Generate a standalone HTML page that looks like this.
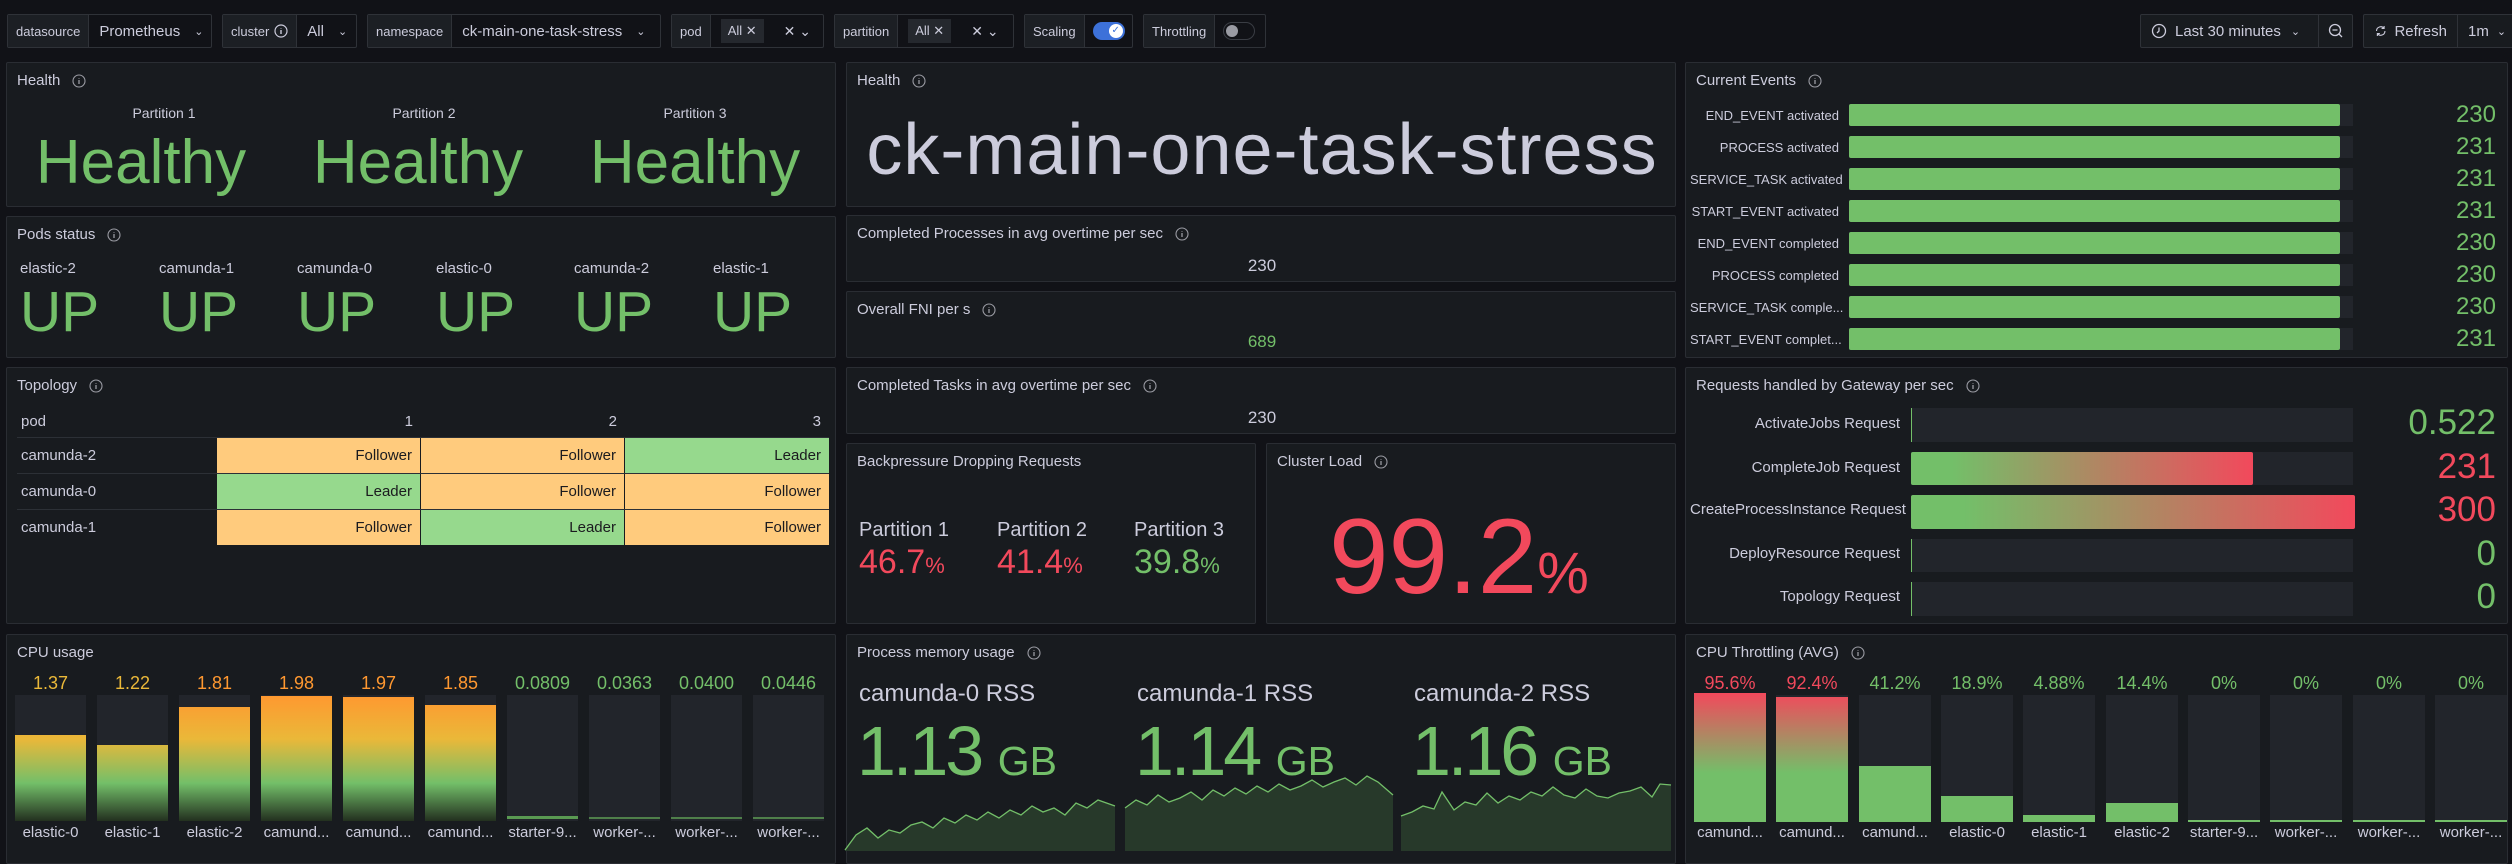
<!DOCTYPE html>
<html><head><meta charset="utf-8"><style>
*{box-sizing:border-box;margin:0;padding:0}
body{width:2512px;height:851px;background:#111217;overflow:hidden;position:relative;font-family:"Liberation Sans",sans-serif;color:#ccccdc}
.a{position:absolute}
.p{position:absolute;background:#181b1f;border:1px solid #2a2d33;border-radius:2px;overflow:hidden}
.t{position:absolute;left:10px;top:9px;font-size:15px;color:#ccccdc;white-space:nowrap;display:flex;align-items:center}
.t svg{margin-left:12px}
.box{position:absolute;top:14px;height:34px;border:1px solid #2f3238;border-radius:2px;display:flex;align-items:center;background:#111217}
.lab{height:100%;display:flex;align-items:center;padding:0 8px;background:#1c1f24;border-right:1px solid #2f3238;font-size:13px;color:#ccccdc}
.val{padding:0 10px;font-size:15px;color:#ccccdc;display:flex;align-items:center}
.g{color:#73bf69}.r{color:#f2495c}.o{color:#ff9830}
.c{position:absolute;text-align:center;white-space:nowrap}
.cell{position:absolute;height:35px;text-align:right;padding-right:8px;line-height:35px;font-size:15px;color:#1b1b1f}
.F{background:#ffcb7d}.L{background:#96d98d}
.trk{position:absolute;background:#22252b}
.fl{position:absolute;left:0;bottom:0;width:100%}
</style></head><body>

<div class="box" style="left:7px;width:205px"><div class="lab">datasource</div><div class="val">Prometheus <span style="margin-left:14px;font-size:11px">⌄</span></div></div>
<div class="box" style="left:222px;width:135px"><div class="lab">cluster <svg width="14" height="14" style="margin-left:5px" viewBox="0 0 14 14"><circle cx="7" cy="7" r="6" fill="none" stroke="#ccccdc" stroke-width="1.2"/><path d="M7 6v4M7 4v.5" stroke="#ccccdc" stroke-width="1.4"/></svg></div><div class="val">All <span style="margin-left:14px;font-size:11px">⌄</span></div></div>
<div class="box" style="left:367px;width:294px"><div class="lab">namespace</div><div class="val">ck-main-one-task-stress <span style="margin-left:14px;font-size:11px">⌄</span></div></div>
<div class="box" style="left:671px;width:153px"><div class="lab">pod</div><div class="val"><span style="background:#25282e;padding:4px 7px;font-size:13px">All ✕</span><span style="margin-left:20px;font-size:14px">✕ ⌄</span></div></div>
<div class="box" style="left:834px;width:180px"><div class="lab">partition</div><div class="val"><span style="background:#25282e;padding:4px 7px;font-size:13px">All ✕</span><span style="margin-left:20px;font-size:14px">✕ ⌄</span></div></div>
<div class="box" style="left:1024px;width:109px"><div class="lab">Scaling</div><div class="val" style="padding:0 8px"><span style="display:inline-block;width:32px;height:18px;border-radius:9px;background:#3d71d9;position:relative"><span style="position:absolute;right:2px;top:2px;width:14px;height:14px;border-radius:7px;background:#fff;color:#3d71d9;font-size:10px;line-height:14px;text-align:center">✓</span></span></div></div>
<div class="box" style="left:1143px;width:123px"><div class="lab">Throttling</div><div class="val" style="padding:0 8px"><span style="display:inline-block;width:32px;height:18px;border-radius:9px;border:1px solid #3a3d44;position:relative"><span style="position:absolute;left:2px;top:2px;width:12px;height:12px;border-radius:6px;background:#9a9ba3"></span></span></div></div>

<div class="box" style="left:2140px;width:213px;background:#181b1f"><div class="val" style="width:178px;border-right:1px solid #2f3238;height:100%"><svg width="16" height="16" viewBox="0 0 16 16" style="margin-right:8px"><circle cx="8" cy="8" r="6.5" fill="none" stroke="#ccccdc" stroke-width="1.3"/><path d="M8 4.5V8l-2 2" stroke="#ccccdc" stroke-width="1.3" fill="none"/></svg>Last 30 minutes<span style="margin-left:10px;font-size:11px">⌄</span></div><div style="flex:1;display:flex;justify-content:center"><svg width="16" height="16" viewBox="0 0 16 16"><circle cx="7" cy="7" r="5.5" fill="none" stroke="#ccccdc" stroke-width="1.3"/><path d="M4.5 7h5M11 11l3 3" stroke="#ccccdc" stroke-width="1.3"/></svg></div></div>
<div class="box" style="left:2363px;width:160px;background:#181b1f"><div class="val" style="width:94px;border-right:1px solid #2f3238;height:100%"><svg width="16" height="16" viewBox="0 0 16 16" style="margin-right:7px"><path d="M13 8a5 5 0 0 1-9 3M3 8a5 5 0 0 1 9-3M12 2v3h-3M4 14v-3h3" fill="none" stroke="#ccccdc" stroke-width="1.3"/></svg>Refresh</div><div class="val">1m <span style="margin-left:8px;font-size:11px">⌄</span></div></div>

<div class="p" style="left:6px;top:62px;width:830px;height:145px">
<div class="t">Health<svg width="14" height="14" viewBox="0 0 14 14"><circle cx="7" cy="7" r="6" fill="none" stroke="#9a9ba3" stroke-width="1.1"/><path d="M7 6v4M7 4v.6" stroke="#9a9ba3" stroke-width="1.3"/></svg></div>
<div class="c" style="left:97px;width:120px;top:42px;font-size:14px">Partition 1</div>
<div class="c" style="left:357px;width:120px;top:42px;font-size:14px">Partition 2</div>
<div class="c" style="left:628px;width:120px;top:42px;font-size:14px">Partition 3</div>
<div class="c g" style="left:14px;width:240px;top:64px;font-size:62px">Healthy</div>
<div class="c g" style="left:291px;width:240px;top:64px;font-size:62px">Healthy</div>
<div class="c g" style="left:568px;width:240px;top:64px;font-size:62px">Healthy</div>
</div>

<div class="p" style="left:6px;top:216px;width:830px;height:142px">
<div class="t">Pods status<svg width="14" height="14" viewBox="0 0 14 14"><circle cx="7" cy="7" r="6" fill="none" stroke="#9a9ba3" stroke-width="1.1"/><path d="M7 6v4M7 4v.6" stroke="#9a9ba3" stroke-width="1.3"/></svg></div>
<div class="a" style="left:13px;top:43px;font-size:15px">elastic-2</div>
<div class="a" style="left:152px;top:43px;font-size:15px">camunda-1</div>
<div class="a" style="left:290px;top:43px;font-size:15px">camunda-0</div>
<div class="a" style="left:429px;top:43px;font-size:15px">elastic-0</div>
<div class="a" style="left:567px;top:43px;font-size:15px">camunda-2</div>
<div class="a" style="left:706px;top:43px;font-size:15px">elastic-1</div>
<div class="a g" style="left:13px;top:62px;font-size:57px">UP</div>
<div class="a g" style="left:152px;top:62px;font-size:57px">UP</div>
<div class="a g" style="left:290px;top:62px;font-size:57px">UP</div>
<div class="a g" style="left:429px;top:62px;font-size:57px">UP</div>
<div class="a g" style="left:567px;top:62px;font-size:57px">UP</div>
<div class="a g" style="left:706px;top:62px;font-size:57px">UP</div>
</div>

<div class="p" style="left:6px;top:367px;width:830px;height:257px">
<div class="t">Topology<svg width="14" height="14" viewBox="0 0 14 14"><circle cx="7" cy="7" r="6" fill="none" stroke="#9a9ba3" stroke-width="1.1"/><path d="M7 6v4M7 4v.6" stroke="#9a9ba3" stroke-width="1.3"/></svg></div>
<div class="a" style="left:14px;top:45px;font-size:15px">pod</div>
<div class="a" style="left:210px;width:204px;top:45px;font-size:15px;text-align:right;padding-right:8px">1</div>
<div class="a" style="left:414px;width:204px;top:45px;font-size:15px;text-align:right;padding-right:8px">2</div>
<div class="a" style="left:618px;width:204px;top:45px;font-size:15px;text-align:right;padding-right:8px">3</div>
<div class="a" style="left:10px;width:812px;top:69px;height:1px;background:#2c3036"></div>
<div class="a" style="left:10px;width:812px;top:105px;height:1px;background:#2c3036"></div>
<div class="a" style="left:10px;width:812px;top:141px;height:1px;background:#2c3036"></div>
<div class="a" style="left:14px;top:79px;font-size:15px">camunda-2</div>
<div class="a" style="left:14px;top:115px;font-size:15px">camunda-0</div>
<div class="a" style="left:14px;top:151px;font-size:15px">camunda-1</div>
<div class="cell F" style="left:210px;width:203px;top:70px">Follower</div>
<div class="cell F" style="left:414px;width:203px;top:70px">Follower</div>
<div class="cell L" style="left:618px;width:204px;top:70px">Leader</div>
<div class="cell L" style="left:210px;width:203px;top:106px">Leader</div>
<div class="cell F" style="left:414px;width:203px;top:106px">Follower</div>
<div class="cell F" style="left:618px;width:204px;top:106px">Follower</div>
<div class="cell F" style="left:210px;width:203px;top:142px">Follower</div>
<div class="cell L" style="left:414px;width:203px;top:142px">Leader</div>
<div class="cell F" style="left:618px;width:204px;top:142px">Follower</div>
</div>

<div class="p" style="left:6px;top:634px;width:830px;height:230px">
<div class="t">CPU usage</div>
</div>

<div class="p" style="left:846px;top:62px;width:830px;height:145px">
<div class="t">Health<svg width="14" height="14" viewBox="0 0 14 14"><circle cx="7" cy="7" r="6" fill="none" stroke="#9a9ba3" stroke-width="1.1"/><path d="M7 6v4M7 4v.6" stroke="#9a9ba3" stroke-width="1.3"/></svg></div>
<div class="c" style="left:0;width:830px;top:46px;font-size:72px;letter-spacing:1px;color:#ccccdc">ck-main-one-task-stress</div>
</div>
<div class="p" style="left:846px;top:215px;width:830px;height:67px">
<div class="t">Completed Processes in avg overtime per sec<svg width="14" height="14" viewBox="0 0 14 14"><circle cx="7" cy="7" r="6" fill="none" stroke="#9a9ba3" stroke-width="1.1"/><path d="M7 6v4M7 4v.6" stroke="#9a9ba3" stroke-width="1.3"/></svg></div>
<div class="c" style="left:0;width:830px;top:40px;font-size:17px">230</div>
</div>
<div class="p" style="left:846px;top:291px;width:830px;height:67px">
<div class="t">Overall FNI per s<svg width="14" height="14" viewBox="0 0 14 14"><circle cx="7" cy="7" r="6" fill="none" stroke="#9a9ba3" stroke-width="1.1"/><path d="M7 6v4M7 4v.6" stroke="#9a9ba3" stroke-width="1.3"/></svg></div>
<div class="c g" style="left:0;width:830px;top:40px;font-size:17px">689</div>
</div>
<div class="p" style="left:846px;top:367px;width:830px;height:67px">
<div class="t">Completed Tasks in avg overtime per sec<svg width="14" height="14" viewBox="0 0 14 14"><circle cx="7" cy="7" r="6" fill="none" stroke="#9a9ba3" stroke-width="1.1"/><path d="M7 6v4M7 4v.6" stroke="#9a9ba3" stroke-width="1.3"/></svg></div>
<div class="c" style="left:0;width:830px;top:40px;font-size:17px">230</div>
</div>
<div class="p" style="left:846px;top:443px;width:410px;height:181px">
<div class="t">Backpressure Dropping Requests</div>
<div class="a" style="left:12px;top:75px;font-size:20px">Partition 1</div>
<div class="a" style="left:150px;top:75px;font-size:20px">Partition 2</div>
<div class="a" style="left:287px;top:75px;font-size:20px">Partition 3</div>
<div class="a r" style="left:12px;top:99px;font-size:34px">46.7<span style="font-size:22px">%</span></div>
<div class="a r" style="left:150px;top:99px;font-size:34px">41.4<span style="font-size:22px">%</span></div>
<div class="a g" style="left:287px;top:99px;font-size:34px">39.8<span style="font-size:22px">%</span></div>
</div>
<div class="p" style="left:1266px;top:443px;width:410px;height:181px">
<div class="t">Cluster Load<svg width="14" height="14" viewBox="0 0 14 14"><circle cx="7" cy="7" r="6" fill="none" stroke="#9a9ba3" stroke-width="1.1"/><path d="M7 6v4M7 4v.6" stroke="#9a9ba3" stroke-width="1.3"/></svg></div>
<div class="a r" style="left:62px;top:52px;font-size:107px;line-height:120px;white-space:nowrap">99.2<span style="font-size:58px">%</span></div>
</div>
<div class="p" style="left:846px;top:634px;width:830px;height:230px">
<div class="t">Process memory usage<svg width="14" height="14" viewBox="0 0 14 14"><circle cx="7" cy="7" r="6" fill="none" stroke="#9a9ba3" stroke-width="1.1"/><path d="M7 6v4M7 4v.6" stroke="#9a9ba3" stroke-width="1.3"/></svg></div>
<div class="a" style="left:12px;top:45px;font-size:24px">camunda-0 RSS</div>
<div class="a" style="left:290px;top:45px;font-size:24px">camunda-1 RSS</div>
<div class="a" style="left:567px;top:45px;font-size:24px">camunda-2 RSS</div>
<div class="a g" style="left:10px;top:76px;font-size:70px;letter-spacing:-3px;white-space:nowrap">1.13 <span style="font-size:41px;letter-spacing:0">GB</span></div>
<div class="a g" style="left:288px;top:76px;font-size:70px;letter-spacing:-3px;white-space:nowrap">1.14 <span style="font-size:41px;letter-spacing:0">GB</span></div>
<div class="a g" style="left:565px;top:76px;font-size:70px;letter-spacing:-3px;white-space:nowrap">1.16 <span style="font-size:41px;letter-spacing:0">GB</span></div>
</div>

<div class="p" style="left:1685px;top:62px;width:823px;height:296px">
<div class="t">Current Events<svg width="14" height="14" viewBox="0 0 14 14"><circle cx="7" cy="7" r="6" fill="none" stroke="#9a9ba3" stroke-width="1.1"/><path d="M7 6v4M7 4v.6" stroke="#9a9ba3" stroke-width="1.3"/></svg></div>
</div>
<div class="p" style="left:1685px;top:367px;width:823px;height:257px">
<div class="t">Requests handled by Gateway per sec<svg width="14" height="14" viewBox="0 0 14 14"><circle cx="7" cy="7" r="6" fill="none" stroke="#9a9ba3" stroke-width="1.1"/><path d="M7 6v4M7 4v.6" stroke="#9a9ba3" stroke-width="1.3"/></svg></div>
</div>
<div class="p" style="left:1685px;top:634px;width:823px;height:230px">
<div class="t">CPU Throttling (AVG)<svg width="14" height="14" viewBox="0 0 14 14"><circle cx="7" cy="7" r="6" fill="none" stroke="#9a9ba3" stroke-width="1.1"/><path d="M7 6v4M7 4v.6" stroke="#9a9ba3" stroke-width="1.3"/></svg></div>
</div>

<div class="a" style="left:1690px;top:104px;width:149px;font-size:13px;text-align:right;line-height:24px;white-space:nowrap">END_EVENT activated</div>
<div class="a" style="left:1690px;top:136px;width:149px;font-size:13px;text-align:right;line-height:24px">PROCESS activated</div>
<div class="a" style="left:1690px;top:168px;width:149px;font-size:13px;text-align:right;line-height:24px;white-space:nowrap">SERVICE_TASK activated</div>
<div class="a" style="left:1690px;top:200px;width:149px;font-size:13px;text-align:right;line-height:24px;white-space:nowrap">START_EVENT activated</div>
<div class="a" style="left:1690px;top:232px;width:149px;font-size:13px;text-align:right;line-height:24px;white-space:nowrap">END_EVENT completed</div>
<div class="a" style="left:1690px;top:264px;width:149px;font-size:13px;text-align:right;line-height:24px">PROCESS completed</div>
<div class="a" style="left:1690px;top:296px;width:149px;font-size:13px;text-align:right;line-height:24px;white-space:nowrap">SERVICE_TASK comple...</div>
<div class="a" style="left:1690px;top:328px;width:149px;font-size:13px;text-align:right;line-height:24px;white-space:nowrap">START_EVENT complet...</div>
<div class="trk" style="left:1849px;top:104px;width:504px;height:22px"><div class="a" style="left:0;top:0;width:491px;height:22px;background:#73bf69;border-radius:2px"></div></div>
<div class="trk" style="left:1849px;top:136px;width:504px;height:22px"><div class="a" style="left:0;top:0;width:491px;height:22px;background:#73bf69;border-radius:2px"></div></div>
<div class="trk" style="left:1849px;top:168px;width:504px;height:22px"><div class="a" style="left:0;top:0;width:491px;height:22px;background:#73bf69;border-radius:2px"></div></div>
<div class="trk" style="left:1849px;top:200px;width:504px;height:22px"><div class="a" style="left:0;top:0;width:491px;height:22px;background:#73bf69;border-radius:2px"></div></div>
<div class="trk" style="left:1849px;top:232px;width:504px;height:22px"><div class="a" style="left:0;top:0;width:491px;height:22px;background:#73bf69;border-radius:2px"></div></div>
<div class="trk" style="left:1849px;top:264px;width:504px;height:22px"><div class="a" style="left:0;top:0;width:491px;height:22px;background:#73bf69;border-radius:2px"></div></div>
<div class="trk" style="left:1849px;top:296px;width:504px;height:22px"><div class="a" style="left:0;top:0;width:491px;height:22px;background:#73bf69;border-radius:2px"></div></div>
<div class="trk" style="left:1849px;top:328px;width:504px;height:22px"><div class="a" style="left:0;top:0;width:491px;height:22px;background:#73bf69;border-radius:2px"></div></div>
<div class="a g" style="left:2400px;width:96px;top:101px;font-size:24px;text-align:right">230</div>
<div class="a g" style="left:2400px;width:96px;top:133px;font-size:24px;text-align:right">231</div>
<div class="a g" style="left:2400px;width:96px;top:165px;font-size:24px;text-align:right">231</div>
<div class="a g" style="left:2400px;width:96px;top:197px;font-size:24px;text-align:right">231</div>
<div class="a g" style="left:2400px;width:96px;top:229px;font-size:24px;text-align:right">230</div>
<div class="a g" style="left:2400px;width:96px;top:261px;font-size:24px;text-align:right">230</div>
<div class="a g" style="left:2400px;width:96px;top:293px;font-size:24px;text-align:right">230</div>
<div class="a g" style="left:2400px;width:96px;top:325px;font-size:24px;text-align:right">231</div>

<div class="a" style="left:1690px;top:415px;width:210px;font-size:15px;text-align:right">ActivateJobs Request</div>
<div class="a" style="left:1690px;top:459px;width:210px;font-size:15px;text-align:right">CompleteJob Request</div>
<div class="a" style="left:1690px;top:501px;width:210px;font-size:15px;text-align:right;white-space:nowrap">CreateProcessInstance Request</div>
<div class="a" style="left:1690px;top:545px;width:210px;font-size:15px;text-align:right">DeployResource Request</div>
<div class="a" style="left:1690px;top:588px;width:210px;font-size:15px;text-align:right">Topology Request</div>
<div class="trk" style="left:1911px;top:408px;width:442px;height:34px;border-left:1px solid #73bf69"></div>
<div class="trk" style="left:1911px;top:452px;width:442px;height:33px"><div class="a" style="left:0;top:0;width:342px;height:33px;background:linear-gradient(90deg,#73bf69 12%,#f2495c 100%);border-radius:2px"></div></div>
<div class="trk" style="left:1911px;top:495px;width:444px;height:34px;background:linear-gradient(90deg,#73bf69 12%,#f2495c 100%);border-radius:2px"></div>
<div class="trk" style="left:1911px;top:539px;width:442px;height:33px;border-left:1px solid #73bf69"></div>
<div class="trk" style="left:1911px;top:582px;width:442px;height:34px;border-left:1px solid #73bf69"></div>
<div class="a g" style="left:2360px;width:136px;top:403px;font-size:35px;text-align:right">0.522</div>
<div class="a r" style="left:2360px;width:136px;top:447px;font-size:35px;text-align:right">231</div>
<div class="a r" style="left:2360px;width:136px;top:490px;font-size:35px;text-align:right">300</div>
<div class="a g" style="left:2360px;width:136px;top:534px;font-size:35px;text-align:right">0</div>
<div class="a g" style="left:2360px;width:136px;top:577px;font-size:35px;text-align:right">0</div>

<div class="c o" style="left:15px;width:71px;top:673px;font-size:18px;color:#eab839">1.37</div>
<div class="c o" style="left:97px;width:71px;top:673px;font-size:18px;color:#eab839">1.22</div>
<div class="c o" style="left:179px;width:71px;top:673px;font-size:18px">1.81</div>
<div class="c o" style="left:261px;width:71px;top:673px;font-size:18px">1.98</div>
<div class="c o" style="left:343px;width:71px;top:673px;font-size:18px">1.97</div>
<div class="c o" style="left:425px;width:71px;top:673px;font-size:18px">1.85</div>
<div class="c g" style="left:507px;width:71px;top:673px;font-size:18px">0.0809</div>
<div class="c g" style="left:589px;width:71px;top:673px;font-size:18px">0.0363</div>
<div class="c g" style="left:671px;width:71px;top:673px;font-size:18px">0.0400</div>
<div class="c g" style="left:753px;width:71px;top:673px;font-size:18px">0.0446</div>
<div class="trk" style="left:15px;top:695px;width:71px;height:126px"><div class="fl" style="height:86px;background:linear-gradient(#ff9830,#eab839 35%,#73bf69 70%,#23301f 100%) bottom/100% 126px"></div></div>
<div class="trk" style="left:97px;top:695px;width:71px;height:126px"><div class="fl" style="height:76px;background:linear-gradient(#ff9830,#eab839 35%,#73bf69 70%,#23301f 100%) bottom/100% 126px"></div></div>
<div class="trk" style="left:179px;top:695px;width:71px;height:126px"><div class="fl" style="height:114px;background:linear-gradient(#ff9830,#eab839 35%,#73bf69 70%,#23301f 100%) bottom/100% 126px"></div></div>
<div class="trk" style="left:261px;top:695px;width:71px;height:126px"><div class="fl" style="height:125px;background:linear-gradient(#ff9830,#eab839 35%,#73bf69 70%,#23301f 100%) bottom/100% 126px"></div></div>
<div class="trk" style="left:343px;top:695px;width:71px;height:126px"><div class="fl" style="height:124px;background:linear-gradient(#ff9830,#eab839 35%,#73bf69 70%,#23301f 100%) bottom/100% 126px"></div></div>
<div class="trk" style="left:425px;top:695px;width:71px;height:126px"><div class="fl" style="height:116px;background:linear-gradient(#ff9830,#eab839 35%,#73bf69 70%,#23301f 100%) bottom/100% 126px"></div></div>
<div class="trk" style="left:507px;top:695px;width:71px;height:126px"><div class="fl" style="height:3px;bottom:2px;background:#5a9a52"></div></div>
<div class="trk" style="left:589px;top:695px;width:71px;height:126px"><div class="fl" style="height:2px;bottom:2px;background:#4f7f4a"></div></div>
<div class="trk" style="left:671px;top:695px;width:71px;height:126px"><div class="fl" style="height:2px;bottom:2px;background:#4f7f4a"></div></div>
<div class="trk" style="left:753px;top:695px;width:71px;height:126px"><div class="fl" style="height:2px;bottom:2px;background:#4f7f4a"></div></div>
<div class="c" style="left:11px;width:79px;top:824px;font-size:15px">elastic-0</div>
<div class="c" style="left:93px;width:79px;top:824px;font-size:15px">elastic-1</div>
<div class="c" style="left:175px;width:79px;top:824px;font-size:15px">elastic-2</div>
<div class="c" style="left:257px;width:79px;top:824px;font-size:15px">camund...</div>
<div class="c" style="left:339px;width:79px;top:824px;font-size:15px">camund...</div>
<div class="c" style="left:421px;width:79px;top:824px;font-size:15px">camund...</div>
<div class="c" style="left:503px;width:79px;top:824px;font-size:15px">starter-9...</div>
<div class="c" style="left:585px;width:79px;top:824px;font-size:15px">worker-...</div>
<div class="c" style="left:667px;width:79px;top:824px;font-size:15px">worker-...</div>
<div class="c" style="left:749px;width:79px;top:824px;font-size:15px">worker-...</div>

<div class="c r" style="left:1694px;width:72px;top:673px;font-size:18px">95.6%</div>
<div class="c r" style="left:1776px;width:72px;top:673px;font-size:18px">92.4%</div>
<div class="c g" style="left:1859px;width:72px;top:673px;font-size:18px">41.2%</div>
<div class="c g" style="left:1941px;width:72px;top:673px;font-size:18px">18.9%</div>
<div class="c g" style="left:2023px;width:72px;top:673px;font-size:18px">4.88%</div>
<div class="c g" style="left:2106px;width:72px;top:673px;font-size:18px">14.4%</div>
<div class="c g" style="left:2188px;width:72px;top:673px;font-size:18px">0%</div>
<div class="c g" style="left:2270px;width:72px;top:673px;font-size:18px">0%</div>
<div class="c g" style="left:2353px;width:72px;top:673px;font-size:18px">0%</div>
<div class="c g" style="left:2435px;width:72px;top:673px;font-size:18px">0%</div>
<div class="trk" style="left:1694px;top:695px;width:72px;height:127px;background:transparent"><div class="fl" style="height:129px;background:linear-gradient(#f2495c,#73bf69 62%) bottom/100% 129px"></div></div>
<div class="trk" style="left:1776px;top:695px;width:72px;height:127px"><div class="fl" style="height:125px;background:linear-gradient(#f2495c,#73bf69 62%) bottom/100% 129px"></div></div>
<div class="trk" style="left:1859px;top:695px;width:72px;height:127px"><div class="fl" style="height:56px;background:#73bf69"></div></div>
<div class="trk" style="left:1941px;top:695px;width:72px;height:127px"><div class="fl" style="height:26px;background:#73bf69"></div></div>
<div class="trk" style="left:2023px;top:695px;width:72px;height:127px"><div class="fl" style="height:7px;background:#73bf69"></div></div>
<div class="trk" style="left:2106px;top:695px;width:72px;height:127px"><div class="fl" style="height:19px;background:#73bf69"></div></div>
<div class="trk" style="left:2188px;top:695px;width:72px;height:127px"><div class="fl" style="height:2px;background:#73bf69"></div></div>
<div class="trk" style="left:2270px;top:695px;width:72px;height:127px"><div class="fl" style="height:2px;background:#73bf69"></div></div>
<div class="trk" style="left:2353px;top:695px;width:72px;height:127px"><div class="fl" style="height:2px;background:#73bf69"></div></div>
<div class="trk" style="left:2435px;top:695px;width:72px;height:127px"><div class="fl" style="height:2px;background:#73bf69"></div></div>
<div class="c" style="left:1690px;width:80px;top:824px;font-size:15px">camund...</div>
<div class="c" style="left:1772px;width:80px;top:824px;font-size:15px">camund...</div>
<div class="c" style="left:1855px;width:80px;top:824px;font-size:15px">camund...</div>
<div class="c" style="left:1937px;width:80px;top:824px;font-size:15px">elastic-0</div>
<div class="c" style="left:2019px;width:80px;top:824px;font-size:15px">elastic-1</div>
<div class="c" style="left:2102px;width:80px;top:824px;font-size:15px">elastic-2</div>
<div class="c" style="left:2184px;width:80px;top:824px;font-size:15px">starter-9...</div>
<div class="c" style="left:2266px;width:80px;top:824px;font-size:15px">worker-...</div>
<div class="c" style="left:2349px;width:80px;top:824px;font-size:15px">worker-...</div>
<div class="c" style="left:2431px;width:80px;top:824px;font-size:15px">worker-...</div>

<svg class="a" style="left:0;top:0" width="2512" height="851" viewBox="0 0 2512 851">
<path d="M845 851 L845 850 L856 835 L867 828 L878 838 L889 830 L900 833 L911 825 L922 822 L933 828 L944 818 L955 823 L966 815 L977 820 L988 812 L999 818 L1010 810 L1021 815 L1032 806 L1043 812 L1054 808 L1065 815 L1076 803 L1087 808 L1098 800 L1115 806 L1115 851Z" fill="#27392a"/>
<path d="M845 850 L856 835 L867 828 L878 838 L889 830 L900 833 L911 825 L922 822 L933 828 L944 818 L955 823 L966 815 L977 820 L988 812 L999 818 L1010 810 L1021 815 L1032 806 L1043 812 L1054 808 L1065 815 L1076 803 L1087 808 L1098 800 L1115 806" fill="none" stroke="#73bf69" stroke-width="1.3"/>
<path d="M1125 851 L1125 808 L1136 800 L1147 805 L1158 795 L1169 802 L1180 798 L1191 792 L1202 800 L1213 790 L1224 796 L1235 788 L1246 794 L1257 786 L1268 792 L1279 784 L1290 790 L1301 786 L1312 780 L1323 787 L1334 782 L1345 778 L1356 785 L1367 776 L1378 782 L1393 795 L1393 851Z" fill="#27392a"/>
<path d="M1125 808 L1136 800 L1147 805 L1158 795 L1169 802 L1180 798 L1191 792 L1202 800 L1213 790 L1224 796 L1235 788 L1246 794 L1257 786 L1268 792 L1279 784 L1290 790 L1301 786 L1312 780 L1323 787 L1334 782 L1345 778 L1356 785 L1367 776 L1378 782 L1393 795" fill="none" stroke="#73bf69" stroke-width="1.3"/>
<path d="M1401 851 L1401 816 L1412 812 L1423 806 L1434 809 L1442 792 L1454 810 L1465 802 L1476 805 L1487 793 L1498 803 L1509 796 L1520 800 L1531 792 L1542 796 L1553 787 L1564 795 L1575 798 L1586 789 L1597 796 L1608 798 L1619 793 L1630 791 L1641 787 L1652 797 L1660 784 L1671 785 L1671 851Z" fill="#27392a"/>
<path d="M1401 816 L1412 812 L1423 806 L1434 809 L1442 792 L1454 810 L1465 802 L1476 805 L1487 793 L1498 803 L1509 796 L1520 800 L1531 792 L1542 796 L1553 787 L1564 795 L1575 798 L1586 789 L1597 796 L1608 798 L1619 793 L1630 791 L1641 787 L1652 797 L1660 784 L1671 785" fill="none" stroke="#73bf69" stroke-width="1.3"/>
</svg>
</body></html>
